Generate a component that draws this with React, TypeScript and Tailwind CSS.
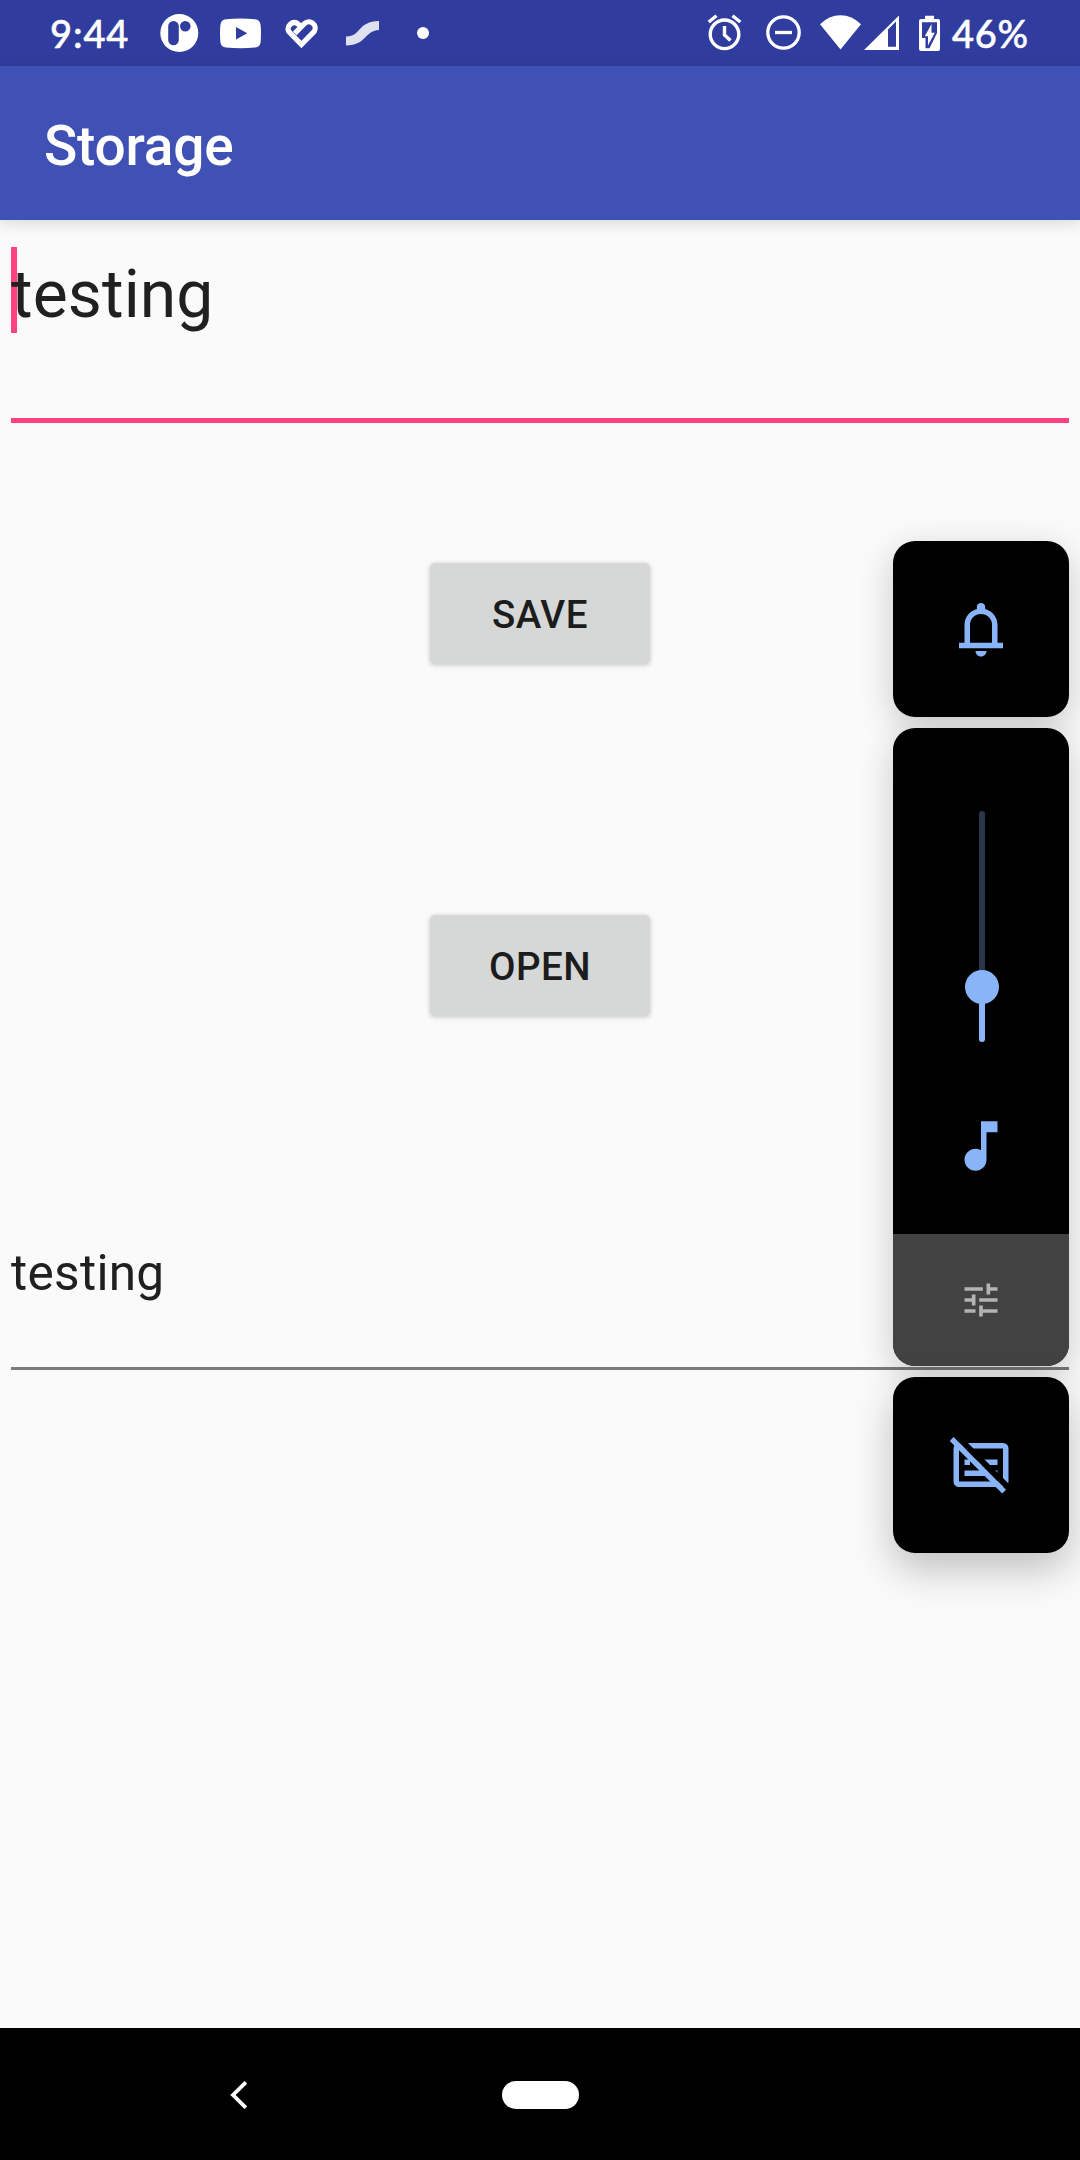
import type { ReactNode } from "react";

function StatusBar() {
  return (
    <header className="flex h-[66px] items-center justify-between bg-[#303d9e] pl-[50px] pr-[51px] text-white">
      <div className="flex items-center">
        <span className="w-[79px] whitespace-nowrap font-['Lato'] text-[38px] leading-[66px] font-medium tracking-[0.900px] [-webkit-text-stroke:0.500px_white]">9:44</span>
        <svg className="ml-[31px]" width="39" height="66" viewBox="160 0 39 66">
          <path
            fillRule="evenodd"
            fill="white"
            d="M179.3 14a19 19 0 1 0 0 38a19 19 0 1 0 0-38ZM173.5 21a5.3 5.3 0 0 1 5.3 5.3V40a5.3 5.3 0 0 1-10.6 0V26.3a5.3 5.3 0 0 1 5.3-5.3ZM185.3 21a5.3 5.3 0 1 1 0 10.6a5.3 5.3 0 1 1 0-10.6Z"
          />
        </svg>
        <svg className="ml-[21px]" width="41" height="66" viewBox="220 0 41 66">
          <path
            fillRule="evenodd"
            fill="white"
            d="M226 19.2Q240.500 17.800 255 19.200Q260.200 19.700 260.600 25Q261.400 33 260.600 42Q260.200 47.200 255 47.600Q240.500 48.800 226 47.600Q220.800 47.200 220.400 42Q219.600 33 220.400 25Q220.800 19.700 226 19.200ZM236 27V39.500L247.300 33.300Z"
          />
        </svg>
        <svg className="ml-[23px]" width="35" height="66" viewBox="284 0 35 66" fill="none" stroke="white" strokeWidth="5.200">
          <path d="M294.800 33.300L304.600 23.500A6.300 6.300 0 0 1 314.300 31.300L301.400 44.600L288.600 31.300A6.300 6.300 0 0 1 297.600 23.500L301.800 27.500" />
        </svg>
        <svg className="ml-[26px]" width="36" height="66" viewBox="345 0 36 66">
          <path d="M346 36.500C361 37 357 21.500 379 21V30C364 31 367 45 346 45.500Z" fill="#dfe0f0" />
        </svg>
        <span className="ml-[36px] size-3 rounded-full bg-white" />
      </div>
      <div className="flex items-center">
        <svg width="35" height="66" viewBox="707 0 35 66" fill="none" stroke="white" strokeWidth="3.400">
          <circle cx="724.500" cy="34.300" r="14.300" />
          <path d="M724.500 26V35L730.500 40.500M708.700 22L716.500 15.700M740.300 22L732.500 15.700" />
        </svg>
        <svg className="ml-[24px]" width="36" height="66" viewBox="766 0 36 66" fill="none" stroke="white" strokeWidth="3.300">
          <circle cx="783.500" cy="32.500" r="15.700" />
          <path d="M775 32.500H792" />
        </svg>
        <svg className="ml-[18px]" width="41" height="66" viewBox="820 0 41 66">
          <path d="M820 24.300Q829 15.300 840.500 15.300T861 24.300L840.500 49.500Z" fill="white" />
        </svg>
        <svg className="ml-[3px]" width="35" height="66" viewBox="864 0 35 66">
          <path fillRule="evenodd" d="M864 50L899 15.500V50ZM888 29.500V46.800H896V21.500Z" fill="white" />
        </svg>
        <svg className="ml-[20px]" width="21" height="66" viewBox="919 0 21 66">
          <path d="M925 19V15.700H934V19H938Q940 19 940 21V49Q940 51 938 51H921Q919 51 919 49V21Q919 19 921 19Z" fill="white" />
          <path d="M922 38V22.300H937V33L929.500 48.300H925.500V38Z" fill="#303d9e" />
          <path d="M931.500 24L924.800 36.300H928V45.500L934.800 32.800H931.500Z" fill="white" />
        </svg>
        <span className="ml-[12px] w-[77px] whitespace-nowrap font-['Lato'] text-[38px] leading-[66px] font-medium tracking-[0.700px] [-webkit-text-stroke:0.500px_white]">46%</span>
      </div>
    </header>
  );
}

function RaisedButton({ children }: { children: ReactNode }) {
  return (
    <button className="h-[101px] w-[220px] rounded-[5px] bg-[#d6d8d7] pt-[3px] text-[38.500px] leading-none font-medium tracking-[0.500px] text-[#1c1c1c] shadow-[0_1px_5px_rgba(0,0,0,0.22)]">
      {children}
    </button>
  );
}

function VolumePanel() {
  return (
    <aside className="absolute top-[541px] right-[11px] flex flex-col gap-[11px]">
      <div className="flex h-44 w-44 items-center justify-center rounded-[22px] bg-black shadow-[0_10px_36px_rgba(0,0,0,0.2)]">
        <svg width="66" height="66" viewBox="0 0 24 24" fill="#8ab4f8">
          <path d="M18 17V10.500C18 7.700 16.100 5.400 13.500 4.700V4A1.500 1.500 0 0 0 10.500 4V4.700C7.900 5.400 6 7.700 6 10.500V17H4V19H20V17ZM16 17H8V10.500A4 4 0 0 1 16 10.500ZM12 22C13.100 22 14 21.100 14 20H10C10 21.100 10.900 22 12 22Z" />
        </svg>
      </div>
      <div className="flex h-[638px] w-44 flex-col overflow-hidden rounded-[22px] bg-black shadow-[0_10px_36px_rgba(0,0,0,0.2)]">
        <div className="flex h-[506px] flex-col items-center pt-[83px]">
          <div className="relative ml-[2px] flex h-[231px] w-[6px] flex-col justify-end overflow-visible rounded-full bg-[#2b364a]">
            <div className="h-[55px] rounded-full bg-[#8ab4f8]" />
            <div className="absolute bottom-[38px] left-[-14px] size-[34px] rounded-full bg-[#8ab4f8]" />
          </div>
          <svg className="mt-[71px]" width="66" height="66" viewBox="0 0 24 24" fill="#8ab4f8">
            <path d="M12 3V13.550C11.400 13.200 10.730 13 10 13C7.790 13 6 14.790 6 17S7.790 21 10 21S14 19.210 14 17V7H18V3Z" />
          </svg>
        </div>
        <div className="flex h-[132px] items-center justify-center bg-[#424242]">
          <svg width="44" height="44" viewBox="0 0 24 24" fill="#b3b3b3">
            <path d="M3 17v2h6v-2H3zM3 5v2h10V5H3zm10 16v-2h8v-2h-8v-2h-2v6h2zM7 9v2H3v2h4v2h2V9H7zm14 4v-2H11v2h10zm-6-4h2V7h4V5h-4V3h-2v6z" />
          </svg>
        </div>
      </div>
      <div className="flex h-44 w-44 items-center justify-center rounded-[22px] bg-black shadow-[0_16px_40px_rgba(0,0,0,0.24)]">
        <svg width="66" height="66" viewBox="0 0 24 24" fill="none" stroke="#8ab4f8" strokeWidth="2">
          <rect x="3" y="5" width="18" height="14" rx="1" />
          <path d="M6 11H8M11 11H18M6 15H14M16 15H18" />
          <path d="M1.500 -0.200L23.600 21.900" stroke="black" strokeWidth="2.200" />
          <path d="M1.330 2.550L20.400 21.700" strokeWidth="1.950" />
        </svg>
      </div>
    </aside>
  );
}

export default function App() {
  return (
    <div className="relative flex h-[2160px] w-[1080px] flex-col overflow-hidden bg-[#fafafa] font-['Roboto',sans-serif] text-[#202020]">
      <StatusBar />
      <div className="flex h-[154px] items-center bg-[#3f51b5] pl-11 shadow-[0_3px_14px_rgba(0,0,0,0.14)]">
        <h1 className="pt-[7px] text-[55px] leading-none font-medium tracking-[-0.200px] text-white">Storage</h1>
      </div>
      <main className="flex flex-1 flex-col items-center px-[11px] pt-[27px]">
        <div className="relative h-[176px] w-full border-b-[5px] border-[#ff4081]">
          <span className="absolute top-0 left-0 h-[86px] w-[6px] bg-[#ff4081]" />
          <span className="relative block pt-[9px] text-[66px] leading-[77px] tracking-[0.100px]">testing</span>
        </div>
        <div className="mt-[140px] flex flex-col gap-[251px]">
          <RaisedButton>SAVE</RaisedButton>
          <RaisedButton>OPEN</RaisedButton>
        </div>
        <div className="mt-[227px] h-[127px] w-full border-b-[3px] border-[#7b7b7b]">
          <span className="block pt-px text-[49.500px] leading-[58px] tracking-[0.300px]">testing</span>
        </div>
      </main>
      <VolumePanel />
      <nav className="flex h-[132px] items-center bg-black">
        <svg className="mt-px ml-[229px]" width="20" height="30" viewBox="0 0 20 30" fill="none" stroke="white" strokeWidth="3.800">
          <path d="M16.800 2.300L4 15L16.800 27.700" />
        </svg>
        <span className="mt-px ml-[253px] h-7 w-[77px] rounded-full bg-white" />
      </nav>
    </div>
  );
}
